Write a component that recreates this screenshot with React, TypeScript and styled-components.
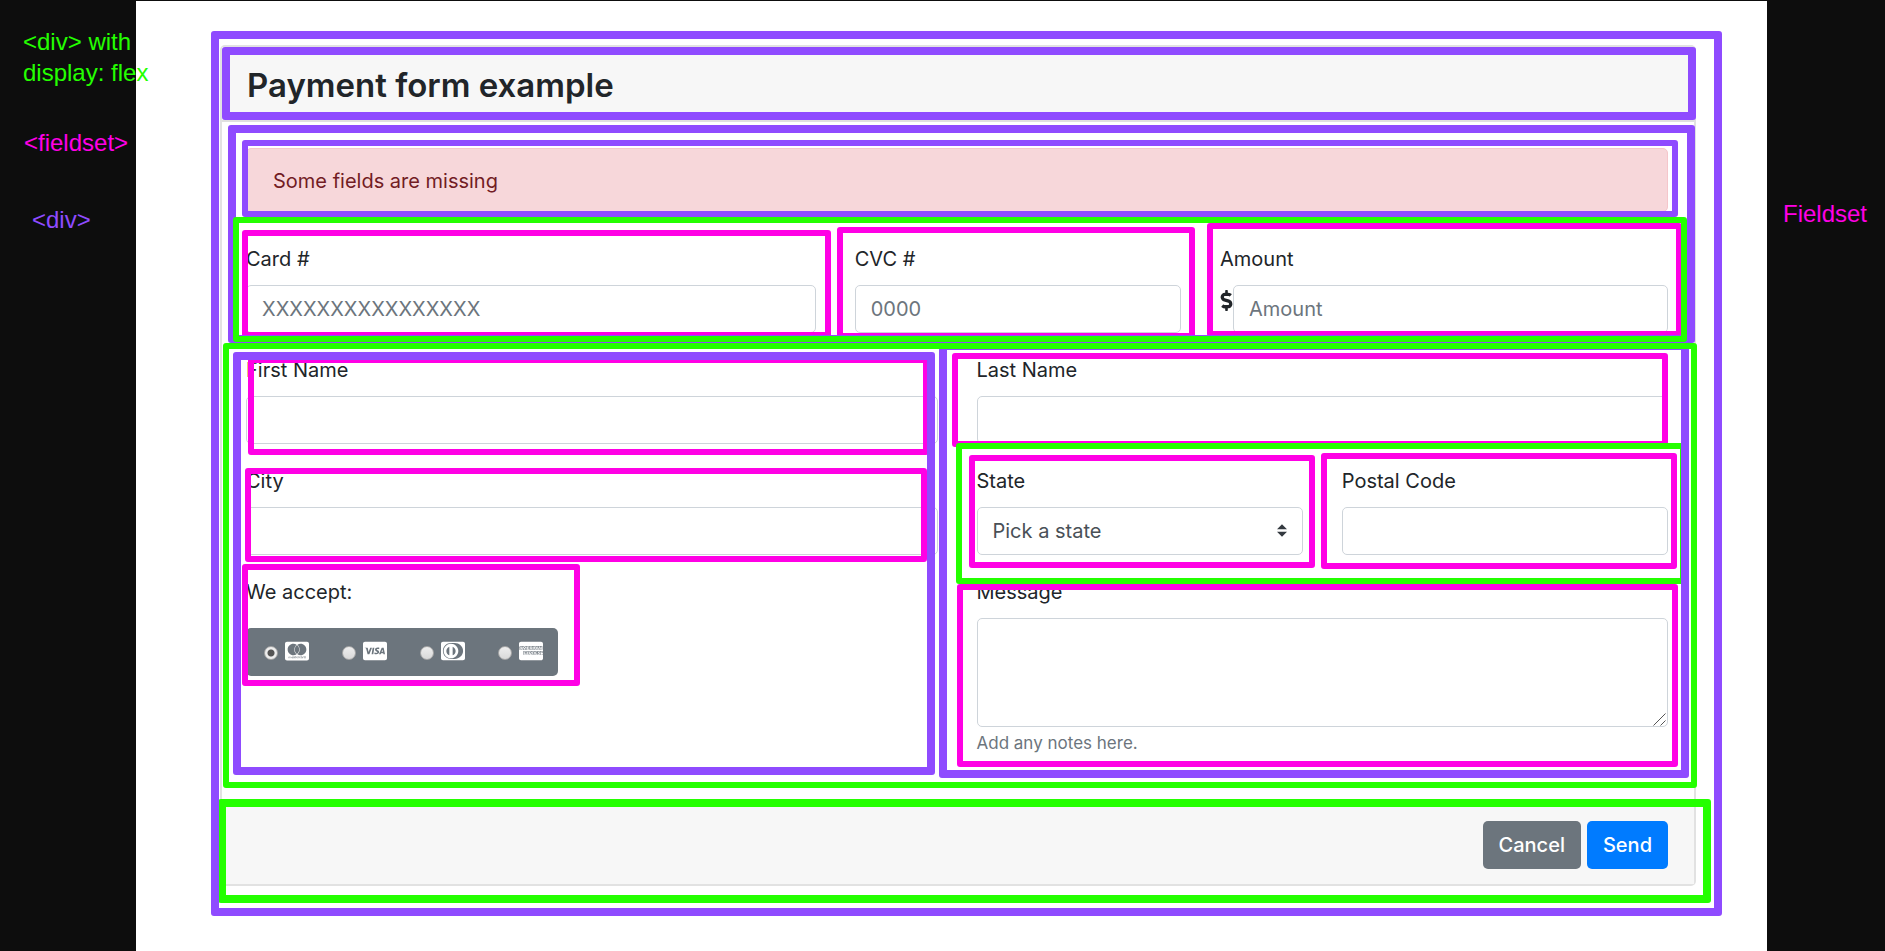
import React from 'react';
import styled, { createGlobalStyle, css } from 'styled-components';
import { FaCcAmex, FaCcDinersClub, FaCcMastercard, FaCcVisa, FaDollarSign } from 'react-icons/fa';

const tones = {
  flex: '#24ff00',
  fieldset: '#ff00e5',
  div: '#8f4bff',
};

type Tone = keyof typeof tones;

const GlobalStyle = createGlobalStyle`
  *, *::before, *::after { box-sizing: border-box; }
  body {
    margin: 0;
    background: #0d0d0d;
    color: #212529;
    font: 400 20px/30px Inter, "Liberation Sans", sans-serif;
  }
  input, select, textarea, button { font: inherit; color: inherit; }
`;

const Page = styled.div`
  display: grid;
  grid-template-columns: 136px minmax(0, 1fr) 118px;
  min-height: 100vh;
  padding-top: 1px;
`;

const Legend = styled.aside<{ $top: number }>`
  position: relative;
  z-index: 6;
  padding-top: ${(p) => p.$top}px;
  font: 24px/31px "Liberation Sans", Arial, sans-serif;
  white-space: nowrap;
`;

const LegendItem = styled.p<{ $tone: Tone; $indent: number; $gap?: number }>`
  margin: 0 0 ${(p) => p.$gap ?? 0}px;
  padding-left: ${(p) => p.$indent}px;
  color: ${(p) => tones[p.$tone]};
`;

const Panel = styled.main`
  padding: 44px 71px 63px 84px;
  background: #fff;
`;

/* Coloured frame drawn around the element that contains it. */
const Outline = styled.span<{ $tone: Tone; $inset: [number, number, number, number]; $weight?: number; $layer?: number }>`
  position: absolute;
  inset: ${(p) => p.$inset.map((n) => `${n}px`).join(' ')};
  z-index: ${(p) => p.$layer ?? { fieldset: 1, div: 3, flex: 4 }[p.$tone]};
  border: ${(p) => p.$weight ?? 6}px solid ${(p) => tones[p.$tone]};
  border-radius: 3px;
  pointer-events: none;
`;

const Card = styled.form`
  position: relative;
  border: 2px solid #e2e2e2;
  border-radius: 5px;
`;

const CardHeader = styled.div`
  position: relative;
  padding: 17px 24px 14px 25px;
  background: #f7f7f7;
  border-bottom: 2px solid #e0e0e0;
`;

const Title = styled.h1`
  margin: 0;
  font-size: 33px;
  font-weight: 600;
  line-height: 42px;
`;

const CardBody = styled.div`
  padding: 26px 26px 48px 24px;
`;

const Intro = styled.div`
  position: relative;
  margin-bottom: 22px;
`;

const Alert = styled.div`
  position: relative;
  margin-bottom: 32px;
  padding: 17px 26px 15px;
  background: #f7d7da;
  border: 1px solid #f5c6cb;
  border-radius: 5px;
  color: #721c24;
`;

const Row = styled.div`
  position: relative;
  display: grid;
  grid-template-columns: repeat(12, minmax(0, 1fr));
  column-gap: 39px;
`;

const Column = styled.div`
  position: relative;
  grid-column: span 6;
  display: flex;
  flex-direction: column;
  gap: 22px;
`;

const Field = styled.fieldset<{ $span?: number; $fit?: boolean }>`
  position: relative;
  grid-column: span ${(p) => p.$span ?? 12};
  width: ${(p) => (p.$fit ? 'fit-content' : 'auto')};
  min-width: 0;
  margin: 0;
  padding: 0;
  border: 0;
`;

const Label = styled.label`
  display: block;
  margin-bottom: 11px;
`;

const control = css`
  display: block;
  width: 100%;
  height: 48px;
  padding: 0 15px;
  background: #fff;
  border: 1px solid #ced4da;
  border-radius: 5px;
  color: #495057;
  &::placeholder { color: #6c757d; opacity: 1; }
`;

const Input = styled.input`${control}`;

const TextAreaWrap = styled.div`
  position: relative;
`;

const TextArea = styled.textarea`
  ${control}
  height: 109px;
  padding: 8px 15px;
  resize: vertical;
  &::-webkit-resizer { display: none; }
`;

const ResizeGrip = styled.svg`
  position: absolute;
  right: 2px;
  bottom: 1px;
  width: 13px;
  height: 13px;
  fill: none;
  stroke: #555;
  pointer-events: none;
`;

const SelectWrap = styled.div`
  position: relative;
`;

const Select = styled.select`
  ${control}
  appearance: none;
`;

const SelectArrows = styled.svg`
  position: absolute;
  top: 17px;
  right: 16px;
  width: 10px;
  height: 13px;
  fill: #343a40;
  pointer-events: none;
`;

const MoneyInput = styled.div`
  display: flex;
  align-items: flex-start;
`;

const DollarIcon = styled(FaDollarSign)`
  flex: none;
  width: 13px;
  height: 21px;
  margin-top: 5px;
`;

const Help = styled.small`
  display: block;
  margin-top: 4px;
  color: #6c757d;
  font-size: 17px;
  line-height: 24px;
`;

const GroupLabel = styled.div`
  margin-bottom: 21px;
`;

const CardTypes = styled.div`
  display: flex;
  height: 48px;
  background: #6c757d;
  border-radius: 5px;
`;

const CardType = styled.label`
  display: flex;
  align-items: center;
  gap: 7px;
  width: 78px;
  padding-left: 18px;
  color: #fff;
  svg { margin-bottom: 2px; }
`;

const Radio = styled.input`
  appearance: none;
  width: 14px;
  height: 14px;
  margin: 1px 0 0;
  border: 1px solid #a6a6a6;
  border-radius: 50%;
  background: linear-gradient(#eee, #d9d9d9);
  &:checked { background: radial-gradient(circle, #555 0 3px, #eee 4px); }
`;

const CardFooter = styled.div`
  position: relative;
  display: flex;
  justify-content: flex-end;
  gap: 6px;
  padding: 16px 26px 15px 24px;
  background: #f7f7f7;
  border-top: 2px solid #e0e0e0;
`;

const Button = styled.button<{ $primary?: boolean }>`
  height: 48px;
  padding: 0 16px;
  border: 0;
  border-radius: 5px;
  background: ${(p) => (p.$primary ? '#007bff' : '#6c757d')};
  color: #fff;
  font-weight: 500;
`;

const cardTypes = [
  { id: 'mastercard', name: 'Mastercard', Icon: FaCcMastercard },
  { id: 'visa', name: 'Visa', Icon: FaCcVisa },
  { id: 'diners', name: 'Diners Club', Icon: FaCcDinersClub },
  { id: 'amex', name: 'American Express', Icon: FaCcAmex },
];

export default function App() {
  return (
    <>
      <GlobalStyle />
      <Page>
        <Legend $top={25}>
          <LegendItem $tone="flex" $indent={23} $gap={39}>
            &lt;div&gt; with
            <br />
            display: flex
          </LegendItem>
          <LegendItem $tone="fieldset" $indent={24} $gap={46}>&lt;fieldset&gt;</LegendItem>
          <LegendItem $tone="div" $indent={32}>&lt;div&gt;</LegendItem>
        </Legend>

        <Panel>
          <Card onSubmit={(e) => e.preventDefault()}>
            <Outline $tone="div" $weight={8} $layer={5} $inset={[-16, -28, -32, -11]} />
            <CardHeader>
              <Outline $tone="div" $weight={8} $inset={[0, -2, 0, 0]} />
              <Title>Payment form example</Title>
            </CardHeader>

            <CardBody>
              <Intro>
                <Outline $tone="div" $weight={8} $inset={[-23, -27, -10, -18]} />
                <Alert role="alert">
                  <Outline $tone="div" $inset={[-9, -11, -6, -5]} />
                  Some fields are missing
                </Alert>
                <Row>
                  <Outline $tone="flex" $inset={[-27, -19, -9, -13]} />
                  <Field $span={5}>
                    <Outline $tone="fieldset" $inset={[-14, -15, -5, -4]} />
                    <Label htmlFor="card">Card #</Label>
                    <Input id="card" placeholder="XXXXXXXXXXXXXXXX" />
                  </Field>
                  <Field $span={3}>
                    <Outline $tone="fieldset" $inset={[-17, -14, -6, -18]} />
                    <Label htmlFor="cvc">CVC #</Label>
                    <Input id="cvc" placeholder="0000" />
                  </Field>
                  <Field $span={4}>
                    <Outline $tone="fieldset" $inset={[-21, -14, -4, -13]} />
                    <Label htmlFor="amount">Amount</Label>
                    <MoneyInput>
                      <DollarIcon aria-hidden="true" />
                      <Input id="amount" placeholder="Amount" />
                    </MoneyInput>
                  </Field>
                </Row>
              </Intro>

              <Row>
                <Outline $tone="flex" $inset={[-12, -29, -33, -23]} />
                <Column>
                  <Outline $tone="div" $weight={8} $inset={[-3, 3, -20, -13]} />
                  <Field>
                    <Outline $tone="fieldset" $inset={[2, 9, -11, 2]} />
                    <Label htmlFor="first">First Name</Label>
                    <Input id="first" />
                  </Field>
                  <Field>
                    <Outline $tone="fieldset" $inset={[2, 11, -7, -1]} />
                    <Label htmlFor="city">City</Label>
                    <Input id="city" />
                  </Field>
                  <Field $fit aria-labelledby="accept">
                    <Outline $tone="fieldset" $inset={[-13, -22, -10, -4]} />
                    <GroupLabel id="accept">We accept:</GroupLabel>
                    <CardTypes>
                      {cardTypes.map(({ id, name, Icon }, i) => (
                        <CardType key={id}>
                          <Radio type="radio" name="type" value={id} aria-label={name} defaultChecked={i === 0} />
                          <Icon size={24} />
                        </CardType>
                      ))}
                    </CardTypes>
                  </Field>
                </Column>

                <Column>
                  <Outline $tone="div" $weight={8} $inset={[-13, -21, -23, -38]} />
                  <Field>
                    <Outline $tone="fieldset" $inset={[-2, 0, -3, -25]} />
                    <Label htmlFor="last">Last Name</Label>
                    <Input id="last" />
                  </Field>
                  <Row>
                    <Outline $tone="flex" $layer={2} $inset={[-23, -18, -29, -21]} />
                    <Field $span={6}>
                      <Outline $tone="fieldset" $inset={[-11, -12, -13, -8]} />
                      <Label htmlFor="state">State</Label>
                      <SelectWrap>
                        <Select id="state">
                          <option>Pick a state</option>
                        </Select>
                        <SelectArrows viewBox="0 0 4 5" aria-hidden="true">
                          <path d="M2 0L0 2h4zm0 5L0 3h4z" />
                        </SelectArrows>
                      </SelectWrap>
                    </Field>
                    <Field $span={6}>
                      <Outline $tone="fieldset" $inset={[-13, -9, -14, -21]} />
                      <Label htmlFor="postal">Postal Code</Label>
                      <Input id="postal" />
                    </Field>
                  </Row>
                  <Field>
                    <Outline $tone="fieldset" $inset={[7, -10, -12, -20]} />
                    <Label htmlFor="message">Message</Label>
                    <TextAreaWrap>
                      <TextArea id="message" aria-describedby="message-help" />
                      <ResizeGrip viewBox="0 0 13 13" aria-hidden="true">
                        <path d="M.5 12.5l12-12M7.5 12.5l5-5" />
                      </ResizeGrip>
                    </TextAreaWrap>
                    <Help id="message-help">Add any notes here.</Help>
                  </Field>
                </Column>
              </Row>
            </CardBody>

            <CardFooter>
              <Outline $tone="flex" $weight={8} $inset={[-6, -17, -19, -4]} />
              <Button type="button">Cancel</Button>
              <Button type="submit" $primary>Send</Button>
            </CardFooter>
          </Card>
        </Panel>

        <Legend $top={197}>
          <LegendItem $tone="fieldset" $indent={16}>Fieldset</LegendItem>
        </Legend>
      </Page>
    </>
  );
}
